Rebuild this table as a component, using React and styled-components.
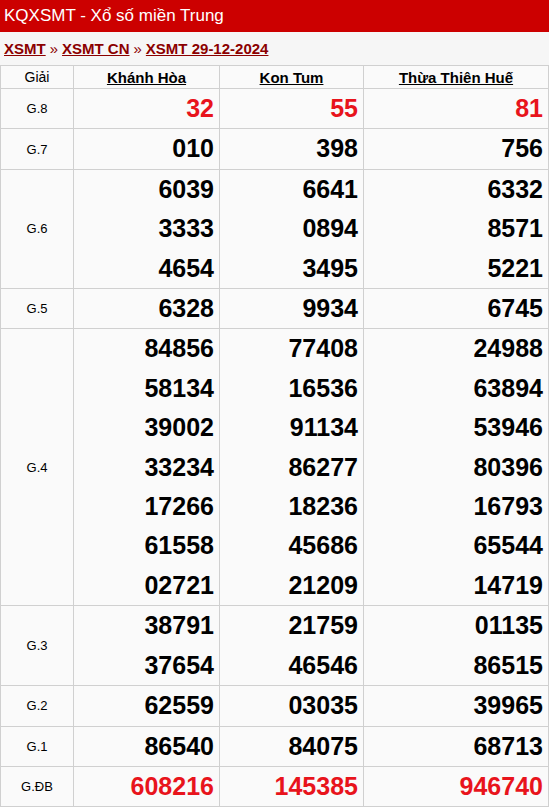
import React from "react";
import styled, { createGlobalStyle } from "styled-components";

const GlobalStyle = createGlobalStyle`
    body {
        margin: 0;
        background: #fff;
        font-family: "Liberation Sans", Arial, sans-serif;
    }
`;

const Page = styled.div`
    width: 549px;
`;

const TitleBar = styled.h1`
    margin: 0;
    height: 32px;
    line-height: 31px;
    padding: 0 4px;
    background: #cc0000;
    color: #fff;
    font-size: 17px;
    font-weight: normal;
`;

const Crumbs = styled.div`
    height: 33px;
    line-height: 34px;
    padding: 0 4px;
    background: #f6f6f6;
    font-size: 15px;
    font-weight: bold;
    color: #8b0000;
`;

const CrumbLink = styled.a`
    color: #8b0000;
    text-decoration: underline;
`;

const Sep = styled.span`
    color: #8b0000;
    font-weight: normal;
    margin: 0 4px;
`;

const Table = styled.table`
    width: 549px;
    border-collapse: collapse;
    table-layout: fixed;
    background: #fafafa;
`;

const HeadCell = styled.th`
    border: 1px solid #d0d0d0;
    height: 22px;
    padding: 0;
    font-size: ${p => (p.$label ? "14px" : "15px")};
    font-weight: ${p => (p.$label ? "normal" : "bold")};
    text-decoration: ${p => (p.$label ? "none" : "underline")};
    color: #000;
    text-align: center;
`;

const PrizeCell = styled.td`
    border: 1px solid #d0d0d0;
    padding: 0;
    font-size: 13px;
    color: #000;
    text-align: center;
`;

const NumCell = styled.td`
    border: 1px solid #d0d0d0;
    padding: 0 5px 0 0;
    text-align: right;
`;

const Num = styled.div`
    line-height: 39.4px;
    font-size: 25px;
    font-weight: bold;
    color: ${p => (p.$red ? "#e8141c" : "#000")};
`;

const provinces = ["Khánh Hòa", "Kon Tum", "Thừa Thiên Huế"];

const results = [
    { name: "G.8", red: true, nums: [["32"], ["55"], ["81"]] },
    { name: "G.7", nums: [["010"], ["398"], ["756"]] },
    {
        name: "G.6",
        nums: [
            ["6039", "3333", "4654"],
            ["6641", "0894", "3495"],
            ["6332", "8571", "5221"]
        ]
    },
    { name: "G.5", nums: [["6328"], ["9934"], ["6745"]] },
    {
        name: "G.4",
        nums: [
            ["84856", "58134", "39002", "33234", "17266", "61558", "02721"],
            ["77408", "16536", "91134", "86277", "18236", "45686", "21209"],
            ["24988", "63894", "53946", "80396", "16793", "65544", "14719"]
        ]
    },
    { name: "G.3", nums: [["38791", "37654"], ["21759", "46546"], ["01135", "86515"]] },
    { name: "G.2", nums: [["62559"], ["03035"], ["39965"]] },
    { name: "G.1", nums: [["86540"], ["84075"], ["68713"]] },
    { name: "G.ĐB", red: true, nums: [["608216"], ["145385"], ["946740"]] }
];

const App = () => (
    <Page>
        <GlobalStyle />
        <TitleBar>KQXSMT - Xổ số miền Trung</TitleBar>
        <Crumbs>
            <CrumbLink href="#">XSMT</CrumbLink>
            <Sep>»</Sep>
            <CrumbLink href="#">XSMT CN</CrumbLink>
            <Sep>»</Sep>
            <CrumbLink href="#">XSMT 29-12-2024</CrumbLink>
        </Crumbs>
        <Table>
            <colgroup>
                <col style={{ width: 73 }} />
                <col style={{ width: 146 }} />
                <col style={{ width: 144 }} />
                <col />
            </colgroup>
            <thead>
                <tr>
                    <HeadCell $label>Giải</HeadCell>
                    {provinces.map(p => (
                        <HeadCell key={p}>{p}</HeadCell>
                    ))}
                </tr>
            </thead>
            <tbody>
                {results.map(row => (
                    <tr key={row.name}>
                        <PrizeCell>{row.name}</PrizeCell>
                        {row.nums.map((list, i) => (
                            <NumCell key={i}>
                                {list.map(n => (
                                    <Num key={n} $red={row.red}>{n}</Num>
                                ))}
                            </NumCell>
                        ))}
                    </tr>
                ))}
            </tbody>
        </Table>
    </Page>
);

export default App;
